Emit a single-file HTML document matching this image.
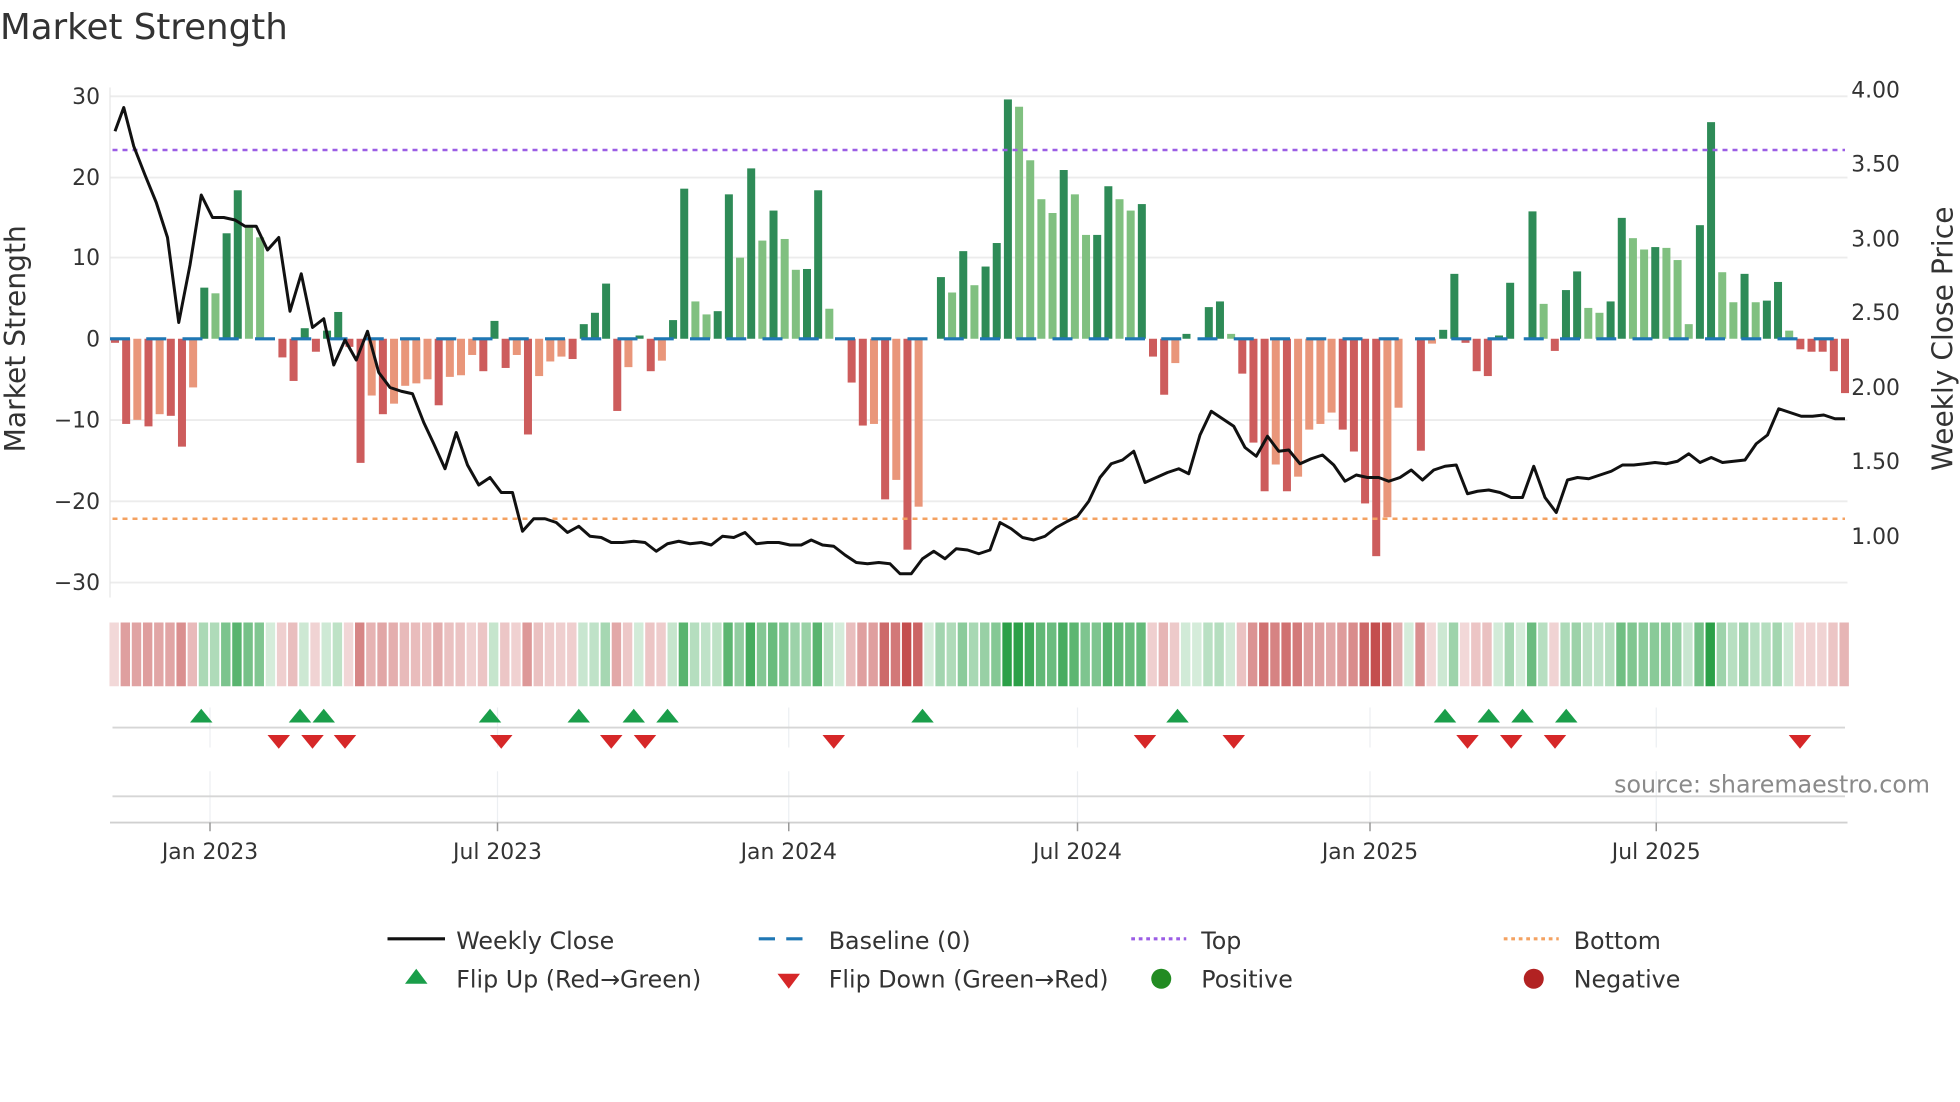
<!DOCTYPE html>
<html><head><meta charset="utf-8"><style>
html,body{margin:0;padding:0;background:#fff;}
svg{display:block;}
text{font-family:"DejaVu Sans","Liberation Sans",sans-serif;fill:#333;}
</style></head><body>
<svg id="s" width="1960" height="1102" viewBox="0 0 1568 881.6" xmlns="http://www.w3.org/2000/svg">
<rect width="1568" height="881.6" fill="#fff"/>
<text x="0" y="31" font-size="28.5">Market Strength</text>
<g stroke="#ececec" stroke-width="1.5">
<line x1="88" y1="77" x2="1478" y2="77"/><line x1="88" y1="142" x2="1478" y2="142"/>
<line x1="88" y1="206" x2="1478" y2="206"/><line x1="88" y1="336" x2="1478" y2="336"/>
<line x1="88" y1="401" x2="1478" y2="401"/><line x1="88" y1="466" x2="1478" y2="466"/>
</g>
<line x1="88" y1="70" x2="88" y2="478" stroke="#e6e6e6" stroke-width="1"/>
<g font-size="17.5" text-anchor="end">
<text x="80" y="83">30</text><text x="80" y="148">20</text><text x="80" y="212">10</text>
<text x="80" y="277">0</text><text x="80" y="342">−10</text><text x="80" y="407">−20</text><text x="80" y="472">−30</text>
</g>
<g font-size="17.5">
<text x="1481" y="78">4.00</text><text x="1481" y="137">3.50</text><text x="1481" y="197">3.00</text>
<text x="1481" y="256">2.50</text><text x="1481" y="316">2.00</text><text x="1481" y="375">1.50</text><text x="1481" y="435">1.00</text>
</g>
<text transform="translate(20,271) rotate(-90)" font-size="22.5" text-anchor="middle">Market Strength</text>
<text transform="translate(1562,271) rotate(-90)" font-size="22.5" text-anchor="middle">Weekly Close Price</text>
<g id="bars"></g>
<line x1="88" y1="271" x2="1478" y2="271" stroke="#1f77b4" stroke-width="2.5" stroke-dasharray="16,13"/>
<line x1="90" y1="120" x2="1476" y2="120" stroke="#9b5de5" stroke-width="2" stroke-dasharray="4,4"/>
<line x1="90" y1="415" x2="1476" y2="415" stroke="#f4a261" stroke-width="2" stroke-dasharray="4,4"/>
<polyline id="price" fill="none" stroke="#111" stroke-width="2.4" stroke-linejoin="round"/>
<g id="strip"></g>
<g stroke="#eceff2" stroke-width="1">
<line x1="168" y1="566" x2="168" y2="598"/><line x1="398" y1="566" x2="398" y2="598"/><line x1="631" y1="566" x2="631" y2="598"/>
<line x1="862" y1="566" x2="862" y2="598"/><line x1="1096" y1="566" x2="1096" y2="598"/><line x1="1325" y1="566" x2="1325" y2="598"/>
<line x1="168" y1="617" x2="168" y2="657"/><line x1="398" y1="617" x2="398" y2="657"/><line x1="631" y1="617" x2="631" y2="657"/>
<line x1="862" y1="617" x2="862" y2="657"/><line x1="1096" y1="617" x2="1096" y2="657"/><line x1="1325" y1="617" x2="1325" y2="657"/>
</g>
<line x1="90" y1="582" x2="1476" y2="582" stroke="#d6d6d6" stroke-width="1.5"/>
<line x1="90" y1="637" x2="1476" y2="637" stroke="#d6d6d6" stroke-width="1.5"/>
<line x1="88" y1="658" x2="1478" y2="658" stroke="#d0d0d0" stroke-width="1.5"/>
<g id="marks"></g>
<text x="1544" y="634" font-size="19" style="fill:#8a8a8a" text-anchor="end">source: sharemaestro.com</text>
<g stroke="#999" stroke-width="1.2">
<line x1="168" y1="658" x2="168" y2="665"/><line x1="398" y1="658" x2="398" y2="665"/><line x1="631" y1="658" x2="631" y2="665"/>
<line x1="862" y1="658" x2="862" y2="665"/><line x1="1096" y1="658" x2="1096" y2="665"/><line x1="1325" y1="658" x2="1325" y2="665"/>
</g>
<g font-size="17.5" text-anchor="middle">
<text x="168" y="687">Jan 2023</text><text x="398" y="687">Jul 2023</text><text x="631" y="687">Jan 2024</text>
<text x="862" y="687">Jul 2024</text><text x="1096" y="687">Jan 2025</text><text x="1325" y="687">Jul 2025</text>
</g>
<g font-size="19">
<line x1="310" y1="751" x2="356" y2="751" stroke="#111" stroke-width="2.5"/>
<text x="365" y="759">Weekly Close</text>
<line x1="607" y1="751" x2="651" y2="751" stroke="#1f77b4" stroke-width="2.5" stroke-dasharray="13,9"/>
<text x="663" y="759">Baseline (0)</text>
<line x1="905" y1="751" x2="949" y2="751" stroke="#9b5de5" stroke-width="2.5" stroke-dasharray="3,3"/>
<text x="961" y="759">Top</text>
<line x1="1203" y1="751" x2="1247" y2="751" stroke="#f4a261" stroke-width="2.5" stroke-dasharray="3,3"/>
<text x="1259" y="759">Bottom</text>
<polygon points="333,775 342,787 324,787" fill="#1a9e4a"/>
<text x="365" y="790">Flip Up (Red→Green)</text>
<polygon points="622,779 640,779 631,791" fill="#d62728"/>
<text x="663" y="790">Flip Down (Green→Red)</text>
<circle cx="929" cy="783" r="8" fill="#228b22"/>
<text x="961" y="790">Positive</text>
<circle cx="1227" cy="783" r="8" fill="#b22222"/>
<text x="1259" y="790">Negative</text>
</g>
</svg>
<script>
var v=[-0.5,-10.5,-10,-10.8,-9.3,-9.5,-13.3,-6,6.3,5.6,13,18.3,14,12.5,0,-2.3,-5.2,1.3,-1.6,1,3.3,-1,-15.3,-7,-9.3,-8,-5.8,-5.5,-5,-8.2,-4.7,-4.5,-2,-4,2.2,-3.6,-2,-11.8,-4.6,-2.8,-2.2,-2.5,1.8,3.2,6.8,-8.9,-3.5,0.4,-4,-2.7,2.3,18.5,4.6,3,3.4,17.8,10,21,12.1,15.8,12.3,8.5,8.6,18.3,3.7,0,-5.4,-10.7,-10.5,-19.8,-17.4,-26,-20.7,0,7.6,5.7,10.8,6.6,8.9,11.8,29.5,28.6,22,17.2,15.5,20.8,17.8,12.8,12.8,18.8,17.2,15.8,16.6,-2.2,-6.9,-3,0.6,0,3.9,4.6,0.6,-4.3,-12.8,-18.8,-15.5,-18.8,-17,-11.2,-10.5,-9.1,-11.2,-13.9,-20.3,-26.8,-22,-8.5,0,-13.8,-0.6,1.1,8,-0.5,-4,-4.6,0.4,6.9,0,15.7,4.3,-1.5,6,8.3,3.8,3.2,4.6,14.9,12.4,11,11.3,11.2,9.7,1.8,14,26.7,8.2,4.5,8,4.5,4.7,7,1,-1.3,-1.6,-1.6,-4,-6.7];
var ns="http://www.w3.org/2000/svg",n=v.length,x0=92,dx=(1476-92)/(n-1);
function el(p,t,a){var e=document.createElementNS(ns,t);for(var k in a)e.setAttribute(k,a[k]);p.appendChild(e);return e;}
var B=document.getElementById('bars'),S=document.getElementById('strip');
for(var i=0;i<n;i++){var x=x0+i*dx,val=v[i],prev=i?v[i-1]:0,y0=271,y=271-val*6.49;
 var dark=Math.abs(val)>=Math.abs(prev)||(val*prev<=0);
 var c=val>=0?(dark?'#2e8b57':'#80c080'):(dark?'#cd5c5c':'#e9967a');
 if(Math.abs(val)>0.05)el(B,'rect',{x:x-3.2,y:Math.min(y,y0),width:6.4,height:Math.abs(y-y0),fill:c});
 var a=Math.min(1,0.2+Math.abs(val)/28*0.9);
 el(S,'rect',{x:x-4.43,y:498,width:dx-1.4,height:51,fill:val>=0?'#2ca048':'#c44e4e','fill-opacity':a.toFixed(2)});
}
var p=[[92,105],[99,86],[107,117],[116,140],[125,162],[134,190],[143,258],[152,212],[161,156],[170,174],[179,174],[188,176],[196,181],[205,181],[214,200],[223,190],[232,249],[241,219],[250,262],[259,255],[267,292],[276,272],[285,288],[294,265],[303,298],[312,310],[321,313],[330,315],[339,338],[347,355],[356,375],[365,346],[374,372],[383,388],[392,382],[401,394],[410,394],[418,425],[427,415],[436,415],[445,418],[454,426],[463,421],[472,429],[481,430],[489,434],[498,434],[507,433],[516,434],[525,441],[534,435],[543,433],[552,435],[561,434],[569,436],[578,429],[587,430],[596,426],[605,435],[614,434],[623,434],[632,436],[641,436],[649,432],[658,436],[667,437],[676,444],[685,450],[694,451],[703,450],[712,451],[720,459],[729,459],[738,447],[747,441],[756,447],[765,439],[774,440],[783,443],[792,440],[800,418],[809,423],[818,430],[827,432],[836,429],[845,422],[854,417],[862,413],[871,401],[880,382],[889,371],[898,368],[907,361],[916,386],[925,382],[934,378],[943,375],[951,379],[960,348],[969,329],[978,335],[987,341],[996,358],[1005,365],[1014,349],[1023,361],[1031,360],[1040,371],[1049,367],[1058,364],[1067,372],[1076,385],[1085,380],[1094,382],[1103,382],[1111,385],[1120,382],[1129,376],[1138,384],[1147,376],[1156,373],[1165,372],[1174,395],[1182,393],[1191,392],[1200,394],[1209,398],[1218,398],[1227,373],[1236,398],[1245,410],[1254,384],[1262,382],[1271,383],[1280,380],[1289,377],[1298,372],[1307,372],[1316,371],[1324,370],[1333,371],[1342,369],[1351,363],[1360,370],[1369,366],[1378,370],[1387,369],[1396,368],[1405,355],[1414,348],[1423,327],[1432,330],[1441,333],[1450,333],[1459,332],[1468,335],[1476,335]];
document.getElementById('price').setAttribute('points',p.map(function(q){return q.join(',')}).join(' '));
var M=document.getElementById('marks');
[161,240,259,392,463,507,534,738,942,1156,1191,1218,1253].forEach(function(x){el(M,'polygon',{points:(x)+',567 '+(x+9)+',578 '+(x-9)+',578',fill:'#1a9e4a'});});
[223,250,276,401,489,516,667,916,987,1174,1209,1244,1440].forEach(function(x){el(M,'polygon',{points:(x-9)+',588 '+(x+9)+',588 '+x+',599',fill:'#d62728'});});
</script>
</body></html>
